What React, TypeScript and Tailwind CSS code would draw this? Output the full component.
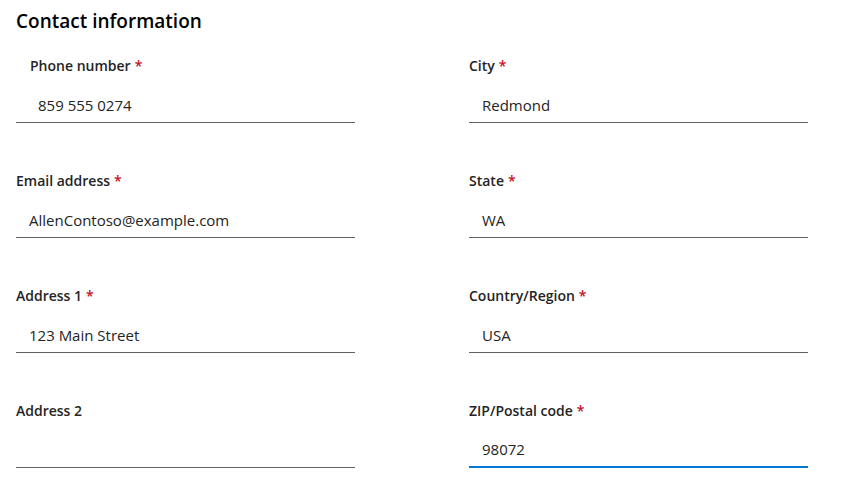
type Field = {
  label: string;
  value: string;
  required?: boolean;
  labelPad?: string;
  inputPad?: string;
  focused?: boolean;
};

const left: Field[] = [
  { label: "Phone number", value: "859 555 0274", required: true, labelPad: "pl-[14px]", inputPad: "pl-[22px]" },
  { label: "Email address", value: "AllenContoso@example.com", required: true },
  { label: "Address 1", value: "123 Main Street", required: true },
  { label: "Address 2", value: "" },
];

const right: Field[] = [
  { label: "City", value: "Redmond", required: true },
  { label: "State", value: "WA", required: true },
  { label: "Country/Region", value: "USA", required: true },
  { label: "ZIP/Postal code", value: "98072", required: true, focused: true },
];

function FormField({ label, value, required, labelPad, inputPad, focused }: Field) {
  return (
    <div className="flex flex-col">
      <label className={`text-[14px] leading-5 font-semibold text-[#242424] ${labelPad ?? ""}`}>
        {label}
        {required && <span className="text-[#c50f1f] ml-1">*</span>}
      </label>
      <div
        className={`mt-[15px] h-8 pb-1 flex items-center ${inputPad ?? "pl-[13px]"} ${
          focused ? "border-b-2 border-[#0078d4]" : "border-b border-[#616161]"
        }`}
      >
        <span className="text-[15px] leading-5 text-[#242424]">{value}</span>
      </div>
    </div>
  );
}

export default function App() {
  return (
    <div
      className="bg-white w-[849px] h-[498px] pl-4 pt-[7px]"
      style={{ fontFamily: '"Open Sans", "Noto Sans", sans-serif' }}
    >
      <h2 className="text-[19px] leading-7 font-semibold text-black">Contact information</h2>
      <div className="grid grid-cols-[339px_339px] gap-x-[114px] mt-[21px]">
        <div className="flex flex-col gap-12">
          {left.map((f, i) => (
            <FormField key={i} {...f} />
          ))}
        </div>
        <div className="flex flex-col gap-12">
          {right.map((f, i) => (
            <FormField key={i} {...f} />
          ))}
        </div>
      </div>
    </div>
  );
}
